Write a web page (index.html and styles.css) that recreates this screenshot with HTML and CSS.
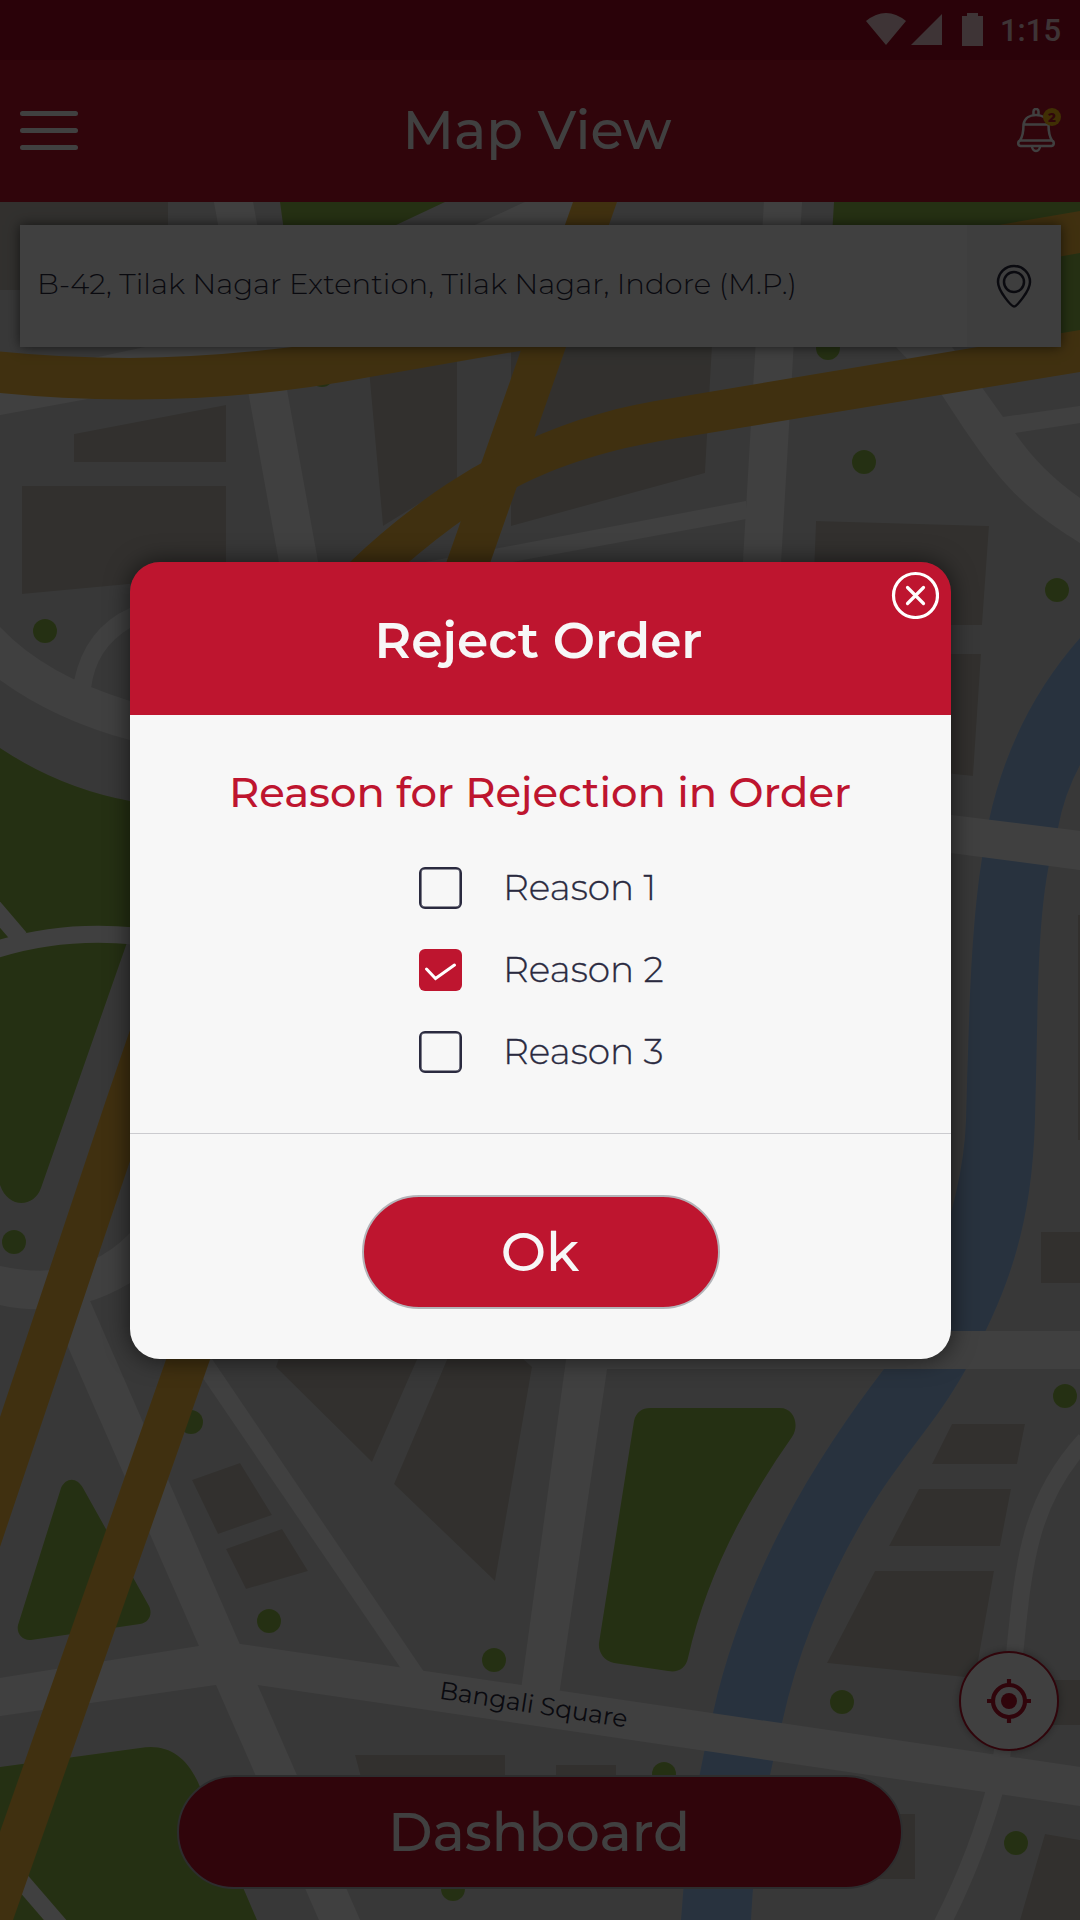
FILE: index.html
```html
<!DOCTYPE html>
<html lang="en">
<head>
<meta charset="utf-8">
<title>Map View</title>
<link rel="stylesheet" href="styles.css">
</head>
<body>
<div class="screen">
  <svg class="map" viewBox="0 0 1080 1920" aria-hidden="true">
    <g class="park">
      <path d="M280 202H445L290 275Z"/>
      <path d="M834 202H1080V335H1040V270H830Z"/>
      <path d="M0 748Q60 788 130 801V934L41 1188C34 1208 8 1209 0 1185Z"/>
      <path d="M61 1488C66 1477 77 1477 83 1488L149 1606C153 1614 149 1623 140 1624L31 1640C23 1641 16 1634 18 1625Z"/>
      <path d="M0 1767L140 1748C168 1743 188 1757 200 1787L257 1920H0Z"/>
      <path d="M650 1408H780C794 1408 800 1425 792 1437Q712 1550 688 1658C686 1668 678 1673 668 1671L614 1663C604 1661 598 1652 599 1643L634 1421C636 1412 642 1408 650 1408Z"/>
    </g>
    <g class="building">
      <path d="M0 202H168V290H0Z"/>
      <path d="M74 434L226 405V462H74Z"/>
      <path d="M22 486H226V575L22 594Z"/>
      <path d="M369 370L457 355V480L383 526Z"/>
      <path d="M511 345H712L705 473L511 526Z"/>
      <path d="M816 521L989 526L982 625H812Z"/>
      <path d="M820 654H981L973 776L820 760Z"/>
      <path d="M1078 915H1080V1140H1078Z"/>
      <path d="M1041 1232H1080V1283H1041Z"/>
      <path d="M280 1355H419L372 1462L276 1367Z"/>
      <path d="M449 1355H519L532 1367L495 1581L394 1484Z"/>
      <path d="M192 1480L240 1463L272 1515L218 1534Z"/>
      <path d="M226 1549L282 1529L308 1571L246 1589Z"/>
      <path d="M355 1755H505V1800H367Z"/>
      <path d="M556 1765H616V1889H556Z"/>
      <path d="M870 1814H915V1879H870Z"/>
      <path d="M952 1424H1025L1017 1464H932Z"/>
      <path d="M919 1489H1011L1000 1546H889Z"/>
      <path d="M875 1571H994L975 1678L827 1663Z"/>
      <path d="M1040 1680H1080V1725H1040Z"/>
      <path d="M1045 1834L1080 1840V1920H1020Z"/>
    </g>
    <path class="river" d="M1080 638Q1012 715 989 820C972 900 970 980 966 1120Q962 1230 884 1369C820 1452 745 1570 713 1713Q687 1820 681 1920H751Q755 1830 782 1723Q804 1622 863 1520C904 1452 935 1425 966 1369C1012 1285 1032 1220 1035 1120C1039 980 1036 900 1058 828Q1064 795 1080 765Z"/>
    <g class="tree">
      <circle cx="322" cy="375" r="12"/><circle cx="828" cy="348" r="12"/>
      <circle cx="864" cy="462" r="12"/><circle cx="1057" cy="590" r="12"/>
      <circle cx="45" cy="631" r="12"/><circle cx="14" cy="1242" r="12"/>
      <circle cx="191" cy="1422" r="12"/><circle cx="269" cy="1621" r="12"/>
      <circle cx="494" cy="1660" r="12"/><circle cx="453" cy="1889" r="12"/>
      <circle cx="842" cy="1702" r="12"/><circle cx="664" cy="1774" r="12"/>
      <circle cx="1016" cy="1843" r="12"/><circle cx="1065" cy="1396" r="12"/>
    </g>
    <g class="street">
      <path d="M214 202H253L318 562H279Z"/>
      <path d="M525 202H600V225H475Z"/>
      <path d="M0 378L145 347H300V360L0 415Z"/>
      <path d="M400 567L746 501V519L430 577Z"/>
      <path d="M764 202H802L781 562H743Z"/>
      <path d="M896 347H952L983 389L1003 417L1080 406V423L1015 433Q1040 470 1080 498V543C1020 505 1000 485 942 395Z"/>
      <path d="M0 627Q45 675 130 701V740Q55 720 0 680Z"/>
      <path d="M74 681Q85 628 130 608V628Q96 648 91 688Z"/>
      <path d="M951 815L1080 831V870L951 853Z"/>
      <path d="M0 1266Q82 1284 130 1233V1283Q68 1320 0 1305Z"/>
      <path d="M48 1301H90L360 1920H319Z"/>
      <path d="M190 1359H212L426 1675L402 1670Z"/>
      <path d="M570 1331H1080V1369H607L559 1695L521 1690Z"/>
      <path d="M0 1678L199 1646L240 1644L521 1685L1080 1767V1806L258 1685H215L0 1716Z"/>
    </g>
    <g class="lane">
      <path d="M-5 950Q60 929 135 936"/>
      <path d="M-10 903L20 938"/>
      <path d="M12 1870L62 1928"/>
      <path d="M1085 1440C1030 1500 1024 1560 1015 1650L1000 1770Q980 1850 942 1924"/>
    </g>
    <g class="highway">
      <path d="M0 351.500Q65 358 130 358Q210 357 292 347L1080 211V253L370 377Q250 400 130 399.500Q60 399 0 393Z"/>
      <path d="M573 202H617L13 1920H-31Z"/>
      <path d="M1080 330L655 401C540 421 440 476 350 562C240 670 170 900 130 1030L106 1100L0 1417V1547L130 1161C200 950 280 680 409 562C485 497 550 461 660 441L1080 372Z"/>
    </g>
    <text class="street-name" transform="translate(438.500 1698.500) rotate(8.800)" textLength="190">Bangali Square</text>
  </svg>

  <div class="page">
    <div class="status-bar">
      <svg width="118" height="34" viewBox="0 0 118 34"><path d="M0 8Q20-8 40 8L20 32ZM45 32L76 1V32ZM96 3H101V0H112V3H117V33H96Z"/></svg>
      <span class="clock">1:15</span>
    </div>
    <header class="app-bar">
      <svg class="menu" width="58" height="40" viewBox="0 0 58 40"><path d="M2.500 2.500H55.500M2.500 19.500H55.500M2.500 36.500H55.500"/></svg>
      <h1 class="app-title">Map View</h1>
      <div class="alerts">
        <svg width="40" height="46" viewBox="0 0 40 46"><path d="M7.500 16.500C8.500 10 14 7 20 7S31.500 10 32.500 16.500C32.500 23 33 28 36 32.500H4C7 28 7.500 23 7.500 16.500ZM7.500 16.500H32.500M17.500 7V3.500A2.500 2.500 0 0 1 22.500 3.500V7M4.500 32.500H35.500A2.800 2.800 0 0 1 35.500 38H4.500A2.800 2.800 0 0 1 4.500 32.500ZM16 38A4 5 0 0 0 24 38"/></svg>
        <span class="badge">2</span>
      </div>
    </header>
    <main class="map-area">
      <div class="search">
        <span class="address">B-42, Tilak Nagar Extention, Tilak Nagar, Indore (M.P.)</span>
        <span class="locate">
          <svg width="36" height="44" viewBox="0 0 36 44"><path d="M18 42.500C15.500 42.500 2 27 2 18A16 16 0 0 1 34 18C34 27 20.500 42.500 18 42.500Z"/><circle cx="18" cy="18" r="10"/></svg>
        </span>
      </div>
      <div class="fab">
        <svg width="44" height="44" viewBox="0 0 44 44"><circle cx="22" cy="22" r="16"/><circle class="dot" cx="22" cy="22" r="8"/><path d="M22 0V5M22 39V44M0 22H5M39 22H44"/></svg>
      </div>
      <div class="pill dashboard"><span>Dashboard</span></div>
    </main>
  </div>

  <div class="scrim">
    <section class="dialog">
      <div class="dialog-head">
        <h2 class="dialog-title">Reject Order</h2>
        <svg class="close" width="48" height="48" viewBox="0 0 48 48"><circle cx="24.500" cy="24.500" r="22"/><path d="M16.500 16.500L32.500 32.500M32.500 16.500L16.500 32.500"/></svg>
      </div>
      <div class="dialog-body">
        <h3 class="prompt">Reason for Rejection in Order</h3>
        <ul class="reasons">
          <li class="reason"><span class="box"></span><span class="label">Reason 1</span></li>
          <li class="reason"><span class="box checked"><svg width="43" height="42" viewBox="0 0 43 42"><path d="M7.500 20L16.500 29.500L35.500 16"/></svg></span><span class="label">Reason 2</span></li>
          <li class="reason"><span class="box"></span><span class="label">Reason 3</span></li>
        </ul>
      </div>
      <div class="dialog-foot"><div class="pill ok"><span>Ok</span></div></div>
    </section>
  </div>
</div>
</body>
</html>
```
FILE: styles.css
```css
* { box-sizing: border-box; }
body { margin: 0; font-family: Montserrat, Inter, sans-serif; }
h1, h2, h3, ul { margin: 0; padding: 0; }
ul { list-style: none; }
svg { display: block; fill: none; }

.screen { display: grid; width: 1080px; height: 1920px; overflow: hidden; background: #e0e0e0; }
.map, .page, .scrim { grid-area: 1 / 1; width: 1080px; height: 1920px; }

.park, .tree { fill: #94c04c; }
.building { fill: #c5c0b8; }
.river { fill: #a0c8f8; }
.street { fill: #fff; }
.lane { stroke: #fff; stroke-width: 17; }
.highway { fill: #fdbf40; }
.street-name { fill: #2a2a3f; font-size: 25px; }

.page { display: flex; flex-direction: column; }
.status-bar { height: 60px; padding: 13px 18px 0 0; display: flex; justify-content: flex-end; align-items: flex-start; gap: 16px; background: #a60a24; color: #f8d0d6; }
.status-bar svg { fill: #f8d0d6; }
.clock { width: 62px; font: 500 31px/36px Roboto, sans-serif; }
.app-bar { height: 142px; padding: 0 20px; display: grid; grid-template-columns: 58px 1fr 64px; align-items: center; background: #be152f; color: #fff; }
.menu { stroke: #fff; stroke-width: 5; stroke-linecap: round; }
.app-title { padding-bottom: 3px; font-size: 54px; font-weight: 500; line-height: 64px; text-align: center; }
.alerts { position: relative; width: 40px; margin: 0 4px 0 auto; }
.alerts svg { stroke: #fff; stroke-width: 2.500; }
.badge { position: absolute; top: 0; right: -5px; width: 18px; height: 18px; border-radius: 9px; background: #fdbd10; color: #be152f; font-size: 13px; font-weight: 800; line-height: 18px; text-align: center; }

.map-area { flex: 1; display: flex; flex-direction: column; padding: 23px 0 31px; }
.search { height: 122px; margin: 0 19px 0 20px; display: flex; background: #fff; box-shadow: 0 0 12px rgba(0, 0, 0, .6); color: #2a2a3f; }
.address { flex: 1; padding-left: 17px; font-size: 29.170px; font-weight: 300; line-height: 118px; white-space: nowrap; }
.locate { width: 94px; padding-bottom: 1px; display: flex; align-items: center; justify-content: center; background: #f5f5f5; }
.locate svg { stroke: #2a2a3f; stroke-width: 2.500; }
.fab { width: 100px; height: 100px; margin: auto 21px 24px auto; display: flex; align-items: center; justify-content: center; border: 2px solid #be152f; border-radius: 50%; background: #fff; box-shadow: 0 0 8px rgba(0, 0, 0, .3); }
.fab svg { stroke: #be152f; stroke-width: 4.200; }
.fab .dot { fill: #be152f; stroke: none; }

.pill { height: 114px; border: 2px solid #b4b4b9; border-radius: 57px; background: #be152f; color: #fff; font-size: 54px; font-weight: 500; line-height: 110px; text-align: center; }
.dashboard { width: 726px; margin: 0 auto; padding-right: 2px; line-height: 111px; }

.scrim { position: relative; z-index: 1; display: flex; justify-content: center; align-items: flex-start; padding: 562px 0 0 1px; background: rgba(0, 0, 0, .75); }
.dialog { width: 821px; height: 797px; overflow: hidden; border-radius: 30px; background: linear-gradient(#be152f 153px, #f7f7f7 153px); box-shadow: 0 0 24px rgba(0, 0, 0, .6); }
.dialog-head { position: relative; height: 153px; color: #f7f7f7; }
.dialog-title { padding: 46px 4px 0 0; font-size: 50.200px; font-weight: 600; line-height: 64px; text-align: center; }
.close { position: absolute; top: 9px; right: 12px; stroke: #fff; stroke-width: 3.200; stroke-linecap: round; }
.dialog-body { height: 419px; padding-top: 52px; border-bottom: 1px solid #cbcbcf; }
.prompt { padding-right: 1px; color: #be152f; font-size: 41.700px; font-weight: 500; line-height: 50px; text-align: center; }
.reasons { display: flex; flex-direction: column; gap: 40px; padding: 50px 0 0 289px; }
.reason { height: 42px; display: flex; align-items: center; gap: 41px; color: #2a2a3f; font-size: 35.900px; font-weight: 300; }
.label { padding-bottom: 2px; -webkit-text-stroke: .3px #2a2a3f; }
.box { width: 43px; height: 42px; border: 2px solid #2a2a3f; border-radius: 6px; box-shadow: inset 0 0 0 .6px #2a2a3f; }
.checked { border: 0; background: #be152f; box-shadow: none; }
.checked svg { stroke: #fff; stroke-width: 3; stroke-linecap: round; }
.dialog-foot { padding-top: 61px; }
.ok { width: 358px; margin: 0 auto; padding-right: 1px; color: #f7f7f7; }
```
